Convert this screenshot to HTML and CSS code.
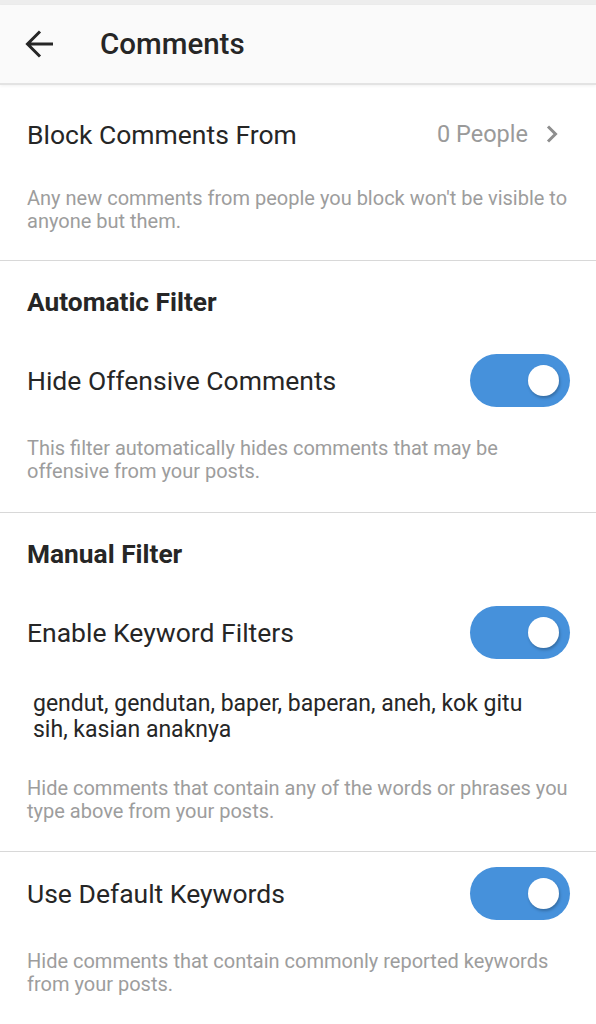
FILE: index.html
```html
<!DOCTYPE html>
<html>
<head>
<meta charset="utf-8">
<link rel="stylesheet" href="styles.css">
</head>
<body>
<div class="status"></div>
<header class="header">
  <svg class="back" width="30" height="30" viewBox="0 0 30 30"><path d="M28 15H3M15 2.5L2.5 15L15 27.5" fill="none" stroke="#262626" stroke-width="3"/></svg>
  <div class="title">Comments</div>
</header>
<main>
  <section class="section s1">
    <div class="row">
      <span class="label">Block Comments From</span>
      <span class="value">0 People
        <svg class="chev" width="14" height="20" viewBox="0 0 14 20"><path d="M3 2.5L10.5 10L3 17.5" fill="none" stroke="#8e8e8e" stroke-width="3"/></svg>
      </span>
    </div>
    <p class="desc">Any new comments from people you block won't be visible to anyone but them.</p>
  </section>
  <section class="section">
    <h2 class="heading">Automatic Filter</h2>
    <div class="row">
      <span class="label">Hide Offensive Comments</span>
      <span class="toggle"><span class="knob"></span></span>
    </div>
    <p class="desc">This filter automatically hides comments that may be offensive from your posts.</p>
  </section>
  <section class="section">
    <h2 class="heading">Manual Filter</h2>
    <div class="row">
      <span class="label">Enable Keyword Filters</span>
      <span class="toggle"><span class="knob"></span></span>
    </div>
    <p class="keywords">gendut, gendutan, baper, baperan, aneh, kok gitu sih, kasian anaknya</p>
    <p class="desc after-kw">Hide comments that contain any of the words or phrases you type above from your posts.</p>
  </section>
  <section class="section s4">
    <div class="row">
      <span class="label">Use Default Keywords</span>
      <span class="toggle"><span class="knob"></span></span>
    </div>
    <p class="desc">Hide comments that contain commonly reported keywords from your posts.</p>
  </section>
</main>
</body>
</html>
```
FILE: styles.css
```css
* { box-sizing: border-box; }
html, body { margin: 0; padding: 0; background: #fff; }
body { font-family: Roboto, "Noto Sans", sans-serif; color: #262626; width: 596px; }
.status { height: 5px; background: #ededed; }
.header {
  height: 80px;
  background: #fafafa;
  border-bottom: 2px solid #e3e3e3;
  box-shadow: 0 1px 3px rgba(0,0,0,0.06);
  display: flex;
  align-items: center;
  padding-left: 25px;
}
.back { display: block; margin-right: 45px; }
.title { font-size: 29.5px; font-weight: 500; color: #262626; }
.section { border-bottom: 1px solid #d8d8d8; padding: 0 27px; }
.s4 { border-bottom: none; }
.row { display: flex; align-items: center; justify-content: space-between; height: 60px; margin-top: 33px; }
.s1 .row { margin-top: 19px; }
.s4 .row { margin-top: 11px; }
.label { font-size: 26.5px; color: #262626; }
.value { font-size: 23.5px; color: #9a9a9a; display: flex; align-items: center; }
.chev { margin-left: 17px; margin-right: 10px; }
.heading { margin: 0; font-size: 26.3px; font-weight: 700; color: #262626; padding-top: 26px; line-height: 30px; }
.desc { margin: 0; font-size: 20px; line-height: 23px; color: #9d9d9d; padding: 26.5px 0 29.5px; }
.s1 .desc { padding: 22.5px 0 27.5px; }
.desc.after-kw { padding: 33.5px 0 28.5px; }
.keywords { margin: 0; font-size: 23px; line-height: 26px; color: #262626; padding: 29px 30px 0 6px; }
.toggle {
  width: 100px; height: 53px; border-radius: 27px; background: #4691db;
  position: relative; margin-right: -1px; flex: none;
}
.knob {
  position: absolute; width: 31px; height: 31px; border-radius: 50%;
  background: #fff; top: 11px; right: 11px;
  box-shadow: 1px 2px 3px rgba(0,0,0,0.25);
}
```
